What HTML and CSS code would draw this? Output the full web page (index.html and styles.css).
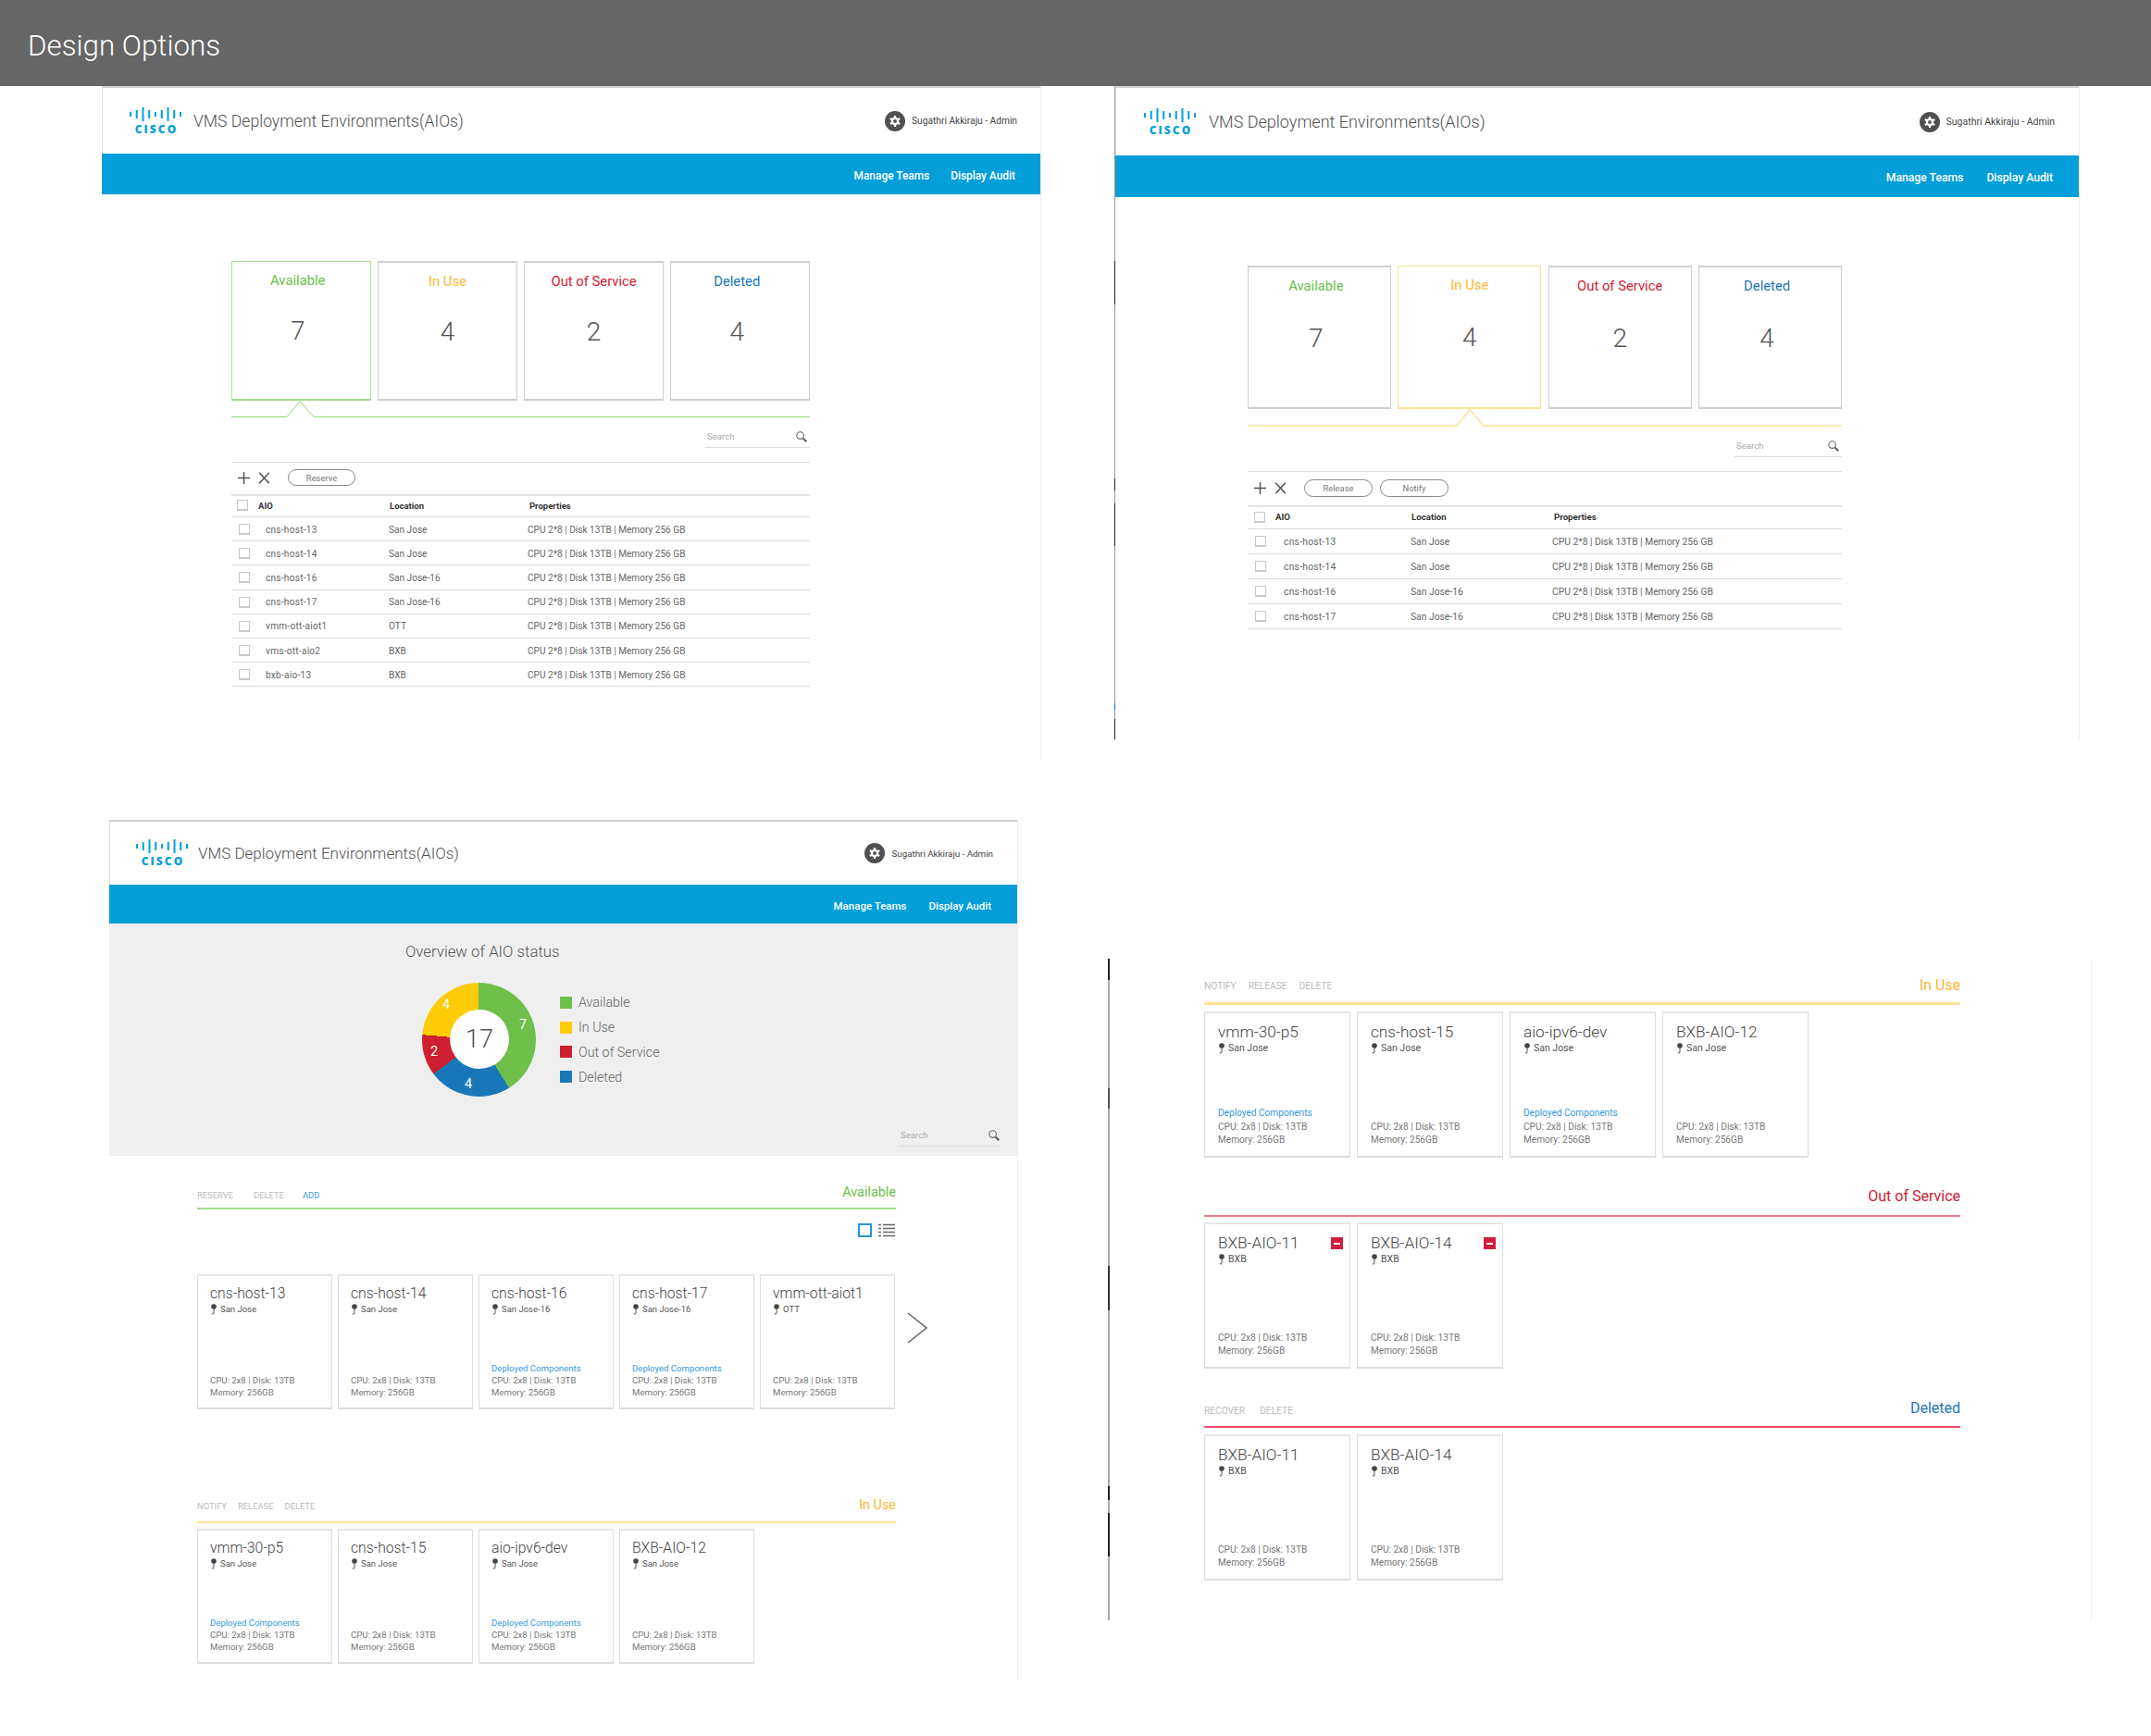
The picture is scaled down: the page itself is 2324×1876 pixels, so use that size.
FILE: index.html
```html
<!DOCTYPE html>
<html lang="en">
<head>
<meta charset="utf-8">
<title>Design Options</title>
<link rel="stylesheet" href="styles.css">
</head>
<body>
<svg class="defs" width="0" height="0" aria-hidden="true">
  <defs>
    <symbol id="bars" viewBox="0 0 56 15">
      <g fill="#049fd9">
        <rect x="0" y="5" width="2" height="5"/><rect x="6.75" y="3" width="2" height="9"/><rect x="13.5" y="0" width="2" height="15"/>
        <rect x="20.25" y="3" width="2" height="9"/><rect x="27" y="5" width="2" height="5"/><rect x="33.75" y="3" width="2" height="9"/>
        <rect x="40.5" y="0" width="2" height="15"/><rect x="47.25" y="3" width="2" height="9"/><rect x="54" y="5" width="2" height="5"/>
      </g>
    </symbol>
    <symbol id="gear" viewBox="0 0 22 22">
      <circle cx="11" cy="11" r="11" fill="#505050"/>
      <g fill="#fff">
        <rect x="9.8" y="5" width="2.4" height="12" rx=".5"/>
        <rect x="9.8" y="5" width="2.4" height="12" rx=".5" transform="rotate(60 11 11)"/>
        <rect x="9.8" y="5" width="2.4" height="12" rx=".5" transform="rotate(120 11 11)"/>
        <circle cx="11" cy="11" r="4.2"/>
      </g>
      <circle cx="11" cy="11" r="1.9" fill="#505050"/>
    </symbol>
    <symbol id="mag" viewBox="0 0 12 12">
      <circle cx="4.6" cy="4.6" r="3.8" fill="none" stroke="#666" stroke-width="1.1"/>
      <path d="M7.6 7.6 11.2 11.2" stroke="#555" stroke-width="2"/>
    </symbol>
    <symbol id="pin" viewBox="0 0 8 12">
      <circle cx="4" cy="3" r="2.8" fill="#444"/>
      <path d="M4 5v5.4M4 10.8H1.8" stroke="#555" stroke-width="1" fill="none"/>
    </symbol>
    <symbol id="plus" viewBox="0 0 13 13"><path d="M6.5 0v13M0 6.5h13" stroke="#555" stroke-width="1.5"/></symbol>
    <symbol id="times" viewBox="0 0 13 13"><path d="M1.2.7l10.6 11.6M11.8.7 1.2 12.3" stroke="#555" stroke-width="1.6"/></symbol>
  </defs>
</svg>

<header class="banner"><h1 class="banner-title">Design Options</h1></header>

<main class="board">
  <div class="column column-left">

    <section class="app app-a">
      <div class="app-head">
        <div class="logo"><svg class="logo-bars"><use href="#bars"/></svg><span class="logo-word">CISCO</span></div>
        <div class="app-title">VMS Deployment Environments(AIOs)</div>
        <div class="user"><svg class="gear"><use href="#gear"/></svg><span class="user-name">Sugathri Akkiraju - Admin</span></div>
      </div>
      <nav class="app-nav"><a class="nav-link">Manage Teams</a><a class="nav-link">Display Audit</a></nav>
      <div class="app-body">
        <div class="status-row">
          <div class="status status-on-green status-nudge"><div class="status-label text-green">Available</div><div class="status-value">7</div></div>
          <div class="status"><div class="status-label text-yellow">In Use</div><div class="status-value">4</div></div>
          <div class="status"><div class="status-label text-red">Out of Service</div><div class="status-value">2</div></div>
          <div class="status status-nudge"><div class="status-label text-blue">Deleted</div><div class="status-value">4</div></div>
        </div>
        <svg class="pointer" viewBox="0 0 625 18" preserveAspectRatio="none"><path d="M0 17.5H60L74 .5 89 17.5H625" fill="none" stroke="#92d67a" stroke-width="1"/></svg>
        <div class="search"><span class="search-text">Search</span><svg class="mag"><use href="#mag"/></svg></div>
        <div class="toolbar">
          <svg class="tool-icon"><use href="#plus"/></svg><svg class="tool-icon"><use href="#times"/></svg>
          <div class="pills"><span class="pill">Reserve</span></div>
        </div>
        <div class="table">
          <div class="thead"><span class="check"></span><span>AIO</span><span>Location</span><span>Properties</span></div>
          <div class="trow"><span class="check"></span><span>cns-host-13</span><span>San Jose</span><span>CPU 2*8 | Disk 13TB | Memory 256 GB</span></div>
          <div class="trow"><span class="check"></span><span>cns-host-14</span><span>San Jose</span><span>CPU 2*8 | Disk 13TB | Memory 256 GB</span></div>
          <div class="trow"><span class="check"></span><span>cns-host-16</span><span>San Jose-16</span><span>CPU 2*8 | Disk 13TB | Memory 256 GB</span></div>
          <div class="trow"><span class="check"></span><span>cns-host-17</span><span>San Jose-16</span><span>CPU 2*8 | Disk 13TB | Memory 256 GB</span></div>
          <div class="trow"><span class="check"></span><span>vmm-ott-aiot1</span><span>OTT</span><span>CPU 2*8 | Disk 13TB | Memory 256 GB</span></div>
          <div class="trow"><span class="check"></span><span>vms-ott-aio2</span><span>BXB</span><span>CPU 2*8 | Disk 13TB | Memory 256 GB</span></div>
          <div class="trow"><span class="check"></span><span>bxb-aio-13</span><span>BXB</span><span>CPU 2*8 | Disk 13TB | Memory 256 GB</span></div>
        </div>
      </div>
    </section>

    <section class="app app-c">
      <div class="app-head">
        <div class="logo"><svg class="logo-bars"><use href="#bars"/></svg><span class="logo-word">CISCO</span></div>
        <div class="app-title">VMS Deployment Environments(AIOs)</div>
        <div class="user"><svg class="gear"><use href="#gear"/></svg><span class="user-name">Sugathri Akkiraju - Admin</span></div>
      </div>
      <nav class="app-nav"><a class="nav-link">Manage Teams</a><a class="nav-link">Display Audit</a></nav>
      <div class="overview">
        <h2 class="overview-title">Overview of AIO status</h2>
        <div class="chart-row">
          <div class="donut">
            <span class="donut-hole">17</span>
            <span class="slice-num slice-green">7</span>
            <span class="slice-num slice-blue">4</span>
            <span class="slice-num slice-red">2</span>
            <span class="slice-num slice-yellow">4</span>
          </div>
          <ul class="legend">
            <li class="legend-item"><i class="swatch swatch-green"></i>Available</li>
            <li class="legend-item"><i class="swatch swatch-yellow"></i>In Use</li>
            <li class="legend-item"><i class="swatch swatch-red"></i>Out of Service</li>
            <li class="legend-item"><i class="swatch swatch-blue"></i>Deleted</li>
          </ul>
        </div>
        <div class="search"><span class="search-text">Search</span><svg class="mag"><use href="#mag"/></svg></div>
      </div>
      <div class="sections">
        <div class="section-head rule-green head-available">
          <div class="actions actions-wide"><span class="action">RESERVE</span><span class="action">DELETE</span><span class="action action-on">ADD</span></div>
          <div class="section-label text-green">Available</div>
        </div>
        <div class="view-toggle">
          <span class="view-card"></span>
          <svg class="view-list" viewBox="0 0 18 15"><path d="M0 1.5h3M5 1.5h13M0 5.5h3M5 5.5h13M0 9.5h3M5 9.5h13M0 13.5h3M5 13.5h13" stroke="#666" stroke-width="1.6"/></svg>
        </div>
        <div class="card-row card-row-carousel">
          <article class="card"><div class="card-name">cns-host-13</div><div class="card-loc"><svg class="pin"><use href="#pin"/></svg>San Jose</div><div class="card-foot"><div>CPU: 2x8 | Disk: 13TB</div><div>Memory: 256GB</div></div></article>
          <article class="card"><div class="card-name">cns-host-14</div><div class="card-loc"><svg class="pin"><use href="#pin"/></svg>San Jose</div><div class="card-foot"><div>CPU: 2x8 | Disk: 13TB</div><div>Memory: 256GB</div></div></article>
          <article class="card"><div class="card-name">cns-host-16</div><div class="card-loc"><svg class="pin"><use href="#pin"/></svg>San Jose-16</div><div class="card-foot"><div class="card-link">Deployed Components</div><div>CPU: 2x8 | Disk: 13TB</div><div>Memory: 256GB</div></div></article>
          <article class="card"><div class="card-name">cns-host-17</div><div class="card-loc"><svg class="pin"><use href="#pin"/></svg>San Jose-16</div><div class="card-foot"><div class="card-link">Deployed Components</div><div>CPU: 2x8 | Disk: 13TB</div><div>Memory: 256GB</div></div></article>
          <article class="card"><div class="card-name">vmm-ott-aiot1</div><div class="card-loc"><svg class="pin"><use href="#pin"/></svg>OTT</div><div class="card-foot"><div>CPU: 2x8 | Disk: 13TB</div><div>Memory: 256GB</div></div></article>
          <svg class="chevron" viewBox="0 0 22 34"><path d="M1 1 21 17 1 33" fill="none" stroke="#666" stroke-width="1.5"/></svg>
        </div>
        <div class="section-head rule-yellow head-inuse">
          <div class="actions"><span class="action">NOTIFY</span><span class="action">RELEASE</span><span class="action">DELETE</span></div>
          <div class="section-label text-yellow">In Use</div>
        </div>
        <div class="card-row">
          <article class="card"><div class="card-name">vmm-30-p5</div><div class="card-loc"><svg class="pin"><use href="#pin"/></svg>San Jose</div><div class="card-foot"><div class="card-link">Deployed Components</div><div>CPU: 2x8 | Disk: 13TB</div><div>Memory: 256GB</div></div></article>
          <article class="card"><div class="card-name">cns-host-15</div><div class="card-loc"><svg class="pin"><use href="#pin"/></svg>San Jose</div><div class="card-foot"><div>CPU: 2x8 | Disk: 13TB</div><div>Memory: 256GB</div></div></article>
          <article class="card"><div class="card-name">aio-ipv6-dev</div><div class="card-loc"><svg class="pin"><use href="#pin"/></svg>San Jose</div><div class="card-foot"><div class="card-link">Deployed Components</div><div>CPU: 2x8 | Disk: 13TB</div><div>Memory: 256GB</div></div></article>
          <article class="card"><div class="card-name">BXB-AIO-12</div><div class="card-loc"><svg class="pin"><use href="#pin"/></svg>San Jose</div><div class="card-foot"><div>CPU: 2x8 | Disk: 13TB</div><div>Memory: 256GB</div></div></article>
        </div>
      </div>
    </section>
  </div>

  <div class="column column-right">
    <section class="app app-b">
      <div class="app-head">
        <div class="logo"><svg class="logo-bars"><use href="#bars"/></svg><span class="logo-word">CISCO</span></div>
        <div class="app-title">VMS Deployment Environments(AIOs)</div>
        <div class="user"><svg class="gear"><use href="#gear"/></svg><span class="user-name">Sugathri Akkiraju - Admin</span></div>
      </div>
      <nav class="app-nav"><a class="nav-link">Manage Teams</a><a class="nav-link">Display Audit</a></nav>
      <div class="app-body">
        <div class="status-row">
          <div class="status status-nudge"><div class="status-label text-green">Available</div><div class="status-value">7</div></div>
          <div class="status status-on-yellow"><div class="status-label text-yellow">In Use</div><div class="status-value">4</div></div>
          <div class="status"><div class="status-label text-red">Out of Service</div><div class="status-value">2</div></div>
          <div class="status status-nudge"><div class="status-label text-blue">Deleted</div><div class="status-value">4</div></div>
        </div>
        <svg class="pointer" viewBox="0 0 642 19" preserveAspectRatio="none"><path d="M0 18H226L240 .5 255 18H642" fill="none" stroke="#fde394" stroke-width="1.4"/></svg>
        <div class="search"><span class="search-text">Search</span><svg class="mag"><use href="#mag"/></svg></div>
        <div class="toolbar">
          <svg class="tool-icon"><use href="#plus"/></svg><svg class="tool-icon"><use href="#times"/></svg>
          <div class="pills"><span class="pill">Release</span><span class="pill">Notify</span></div>
        </div>
        <div class="table">
          <div class="thead"><span class="check"></span><span>AIO</span><span>Location</span><span>Properties</span></div>
          <div class="trow"><span class="check"></span><span>cns-host-13</span><span>San Jose</span><span>CPU 2*8 | Disk 13TB | Memory 256 GB</span></div>
          <div class="trow"><span class="check"></span><span>cns-host-14</span><span>San Jose</span><span>CPU 2*8 | Disk 13TB | Memory 256 GB</span></div>
          <div class="trow"><span class="check"></span><span>cns-host-16</span><span>San Jose-16</span><span>CPU 2*8 | Disk 13TB | Memory 256 GB</span></div>
          <div class="trow"><span class="check"></span><span>cns-host-17</span><span>San Jose-16</span><span>CPU 2*8 | Disk 13TB | Memory 256 GB</span></div>
        </div>
      </div>
    </section>

    <section class="app-d">
      <div class="section-head rule-yellow-strong head-d-inuse">
        <div class="actions actions-d"><span class="action">NOTIFY</span><span class="action">RELEASE</span><span class="action">DELETE</span></div>
        <div class="section-label text-yellow">In Use</div>
      </div>
      <div class="card-row">
        <article class="card"><div class="card-name">vmm-30-p5</div><div class="card-loc"><svg class="pin"><use href="#pin"/></svg>San Jose</div><div class="card-foot"><div class="card-link">Deployed Components</div><div>CPU: 2x8 | Disk: 13TB</div><div>Memory: 256GB</div></div></article>
        <article class="card"><div class="card-name">cns-host-15</div><div class="card-loc"><svg class="pin"><use href="#pin"/></svg>San Jose</div><div class="card-foot"><div>CPU: 2x8 | Disk: 13TB</div><div>Memory: 256GB</div></div></article>
        <article class="card"><div class="card-name">aio-ipv6-dev</div><div class="card-loc"><svg class="pin"><use href="#pin"/></svg>San Jose</div><div class="card-foot"><div class="card-link">Deployed Components</div><div>CPU: 2x8 | Disk: 13TB</div><div>Memory: 256GB</div></div></article>
        <article class="card"><div class="card-name">BXB-AIO-12</div><div class="card-loc"><svg class="pin"><use href="#pin"/></svg>San Jose</div><div class="card-foot"><div>CPU: 2x8 | Disk: 13TB</div><div>Memory: 256GB</div></div></article>
      </div>
      <div class="section-head rule-red-soft head-d-out">
        <div class="actions"></div>
        <div class="section-label text-red">Out of Service</div>
      </div>
      <div class="card-row">
        <article class="card"><span class="minus-badge"></span><div class="card-name">BXB-AIO-11</div><div class="card-loc"><svg class="pin"><use href="#pin"/></svg>BXB</div><div class="card-foot"><div>CPU: 2x8 | Disk: 13TB</div><div>Memory: 256GB</div></div></article>
        <article class="card"><span class="minus-badge"></span><div class="card-name">BXB-AIO-14</div><div class="card-loc"><svg class="pin"><use href="#pin"/></svg>BXB</div><div class="card-foot"><div>CPU: 2x8 | Disk: 13TB</div><div>Memory: 256GB</div></div></article>
      </div>
      <div class="section-head rule-red head-d-deleted">
        <div class="actions actions-mid"><span class="action">RECOVER</span><span class="action">DELETE</span></div>
        <div class="section-label text-blue">Deleted</div>
      </div>
      <div class="card-row">
        <article class="card"><div class="card-name">BXB-AIO-11</div><div class="card-loc"><svg class="pin"><use href="#pin"/></svg>BXB</div><div class="card-foot"><div>CPU: 2x8 | Disk: 13TB</div><div>Memory: 256GB</div></div></article>
        <article class="card"><div class="card-name">BXB-AIO-14</div><div class="card-loc"><svg class="pin"><use href="#pin"/></svg>BXB</div><div class="card-foot"><div>CPU: 2x8 | Disk: 13TB</div><div>Memory: 256GB</div></div></article>
      </div>
    </section>
  </div>
</main>
</body>
</html>
```

FILE: styles.css
```css
* { box-sizing: border-box; }

html, body { margin: 0; padding: 0; }

body {
  width: 2324px;
  height: 1876px;
  overflow: hidden;
  background: #fff;
  color: #555;
  font-family: Roboto, "Liberation Sans", sans-serif;
  font-weight: 300;
}

.defs { position: absolute; }

/* Banner */
.banner {
  height: 93px;
  background: #666;
  display: flex;
  align-items: center;
  padding-left: 30px;
  padding-top: 6px;
}
.banner-title { margin: 0; color: #fff; font-size: 31.3px; font-weight: 300; }

/* Board */
.board { display: flex; }
.column { display: flex; flex-direction: column; align-items: flex-start; }
.column-left { width: 1190px; }

.app { display: flex; flex-direction: column; }

.app-a {
  margin-left: 110px; width: 1015px; height: 729px;
  border-right: 1px solid #eee;
  --head-h: 73px; --nav-h: 44px; --logo-x: 29px; --title-gap: 13px; --title-fs: 17.6px; --head-r: 25px;
  --user-fs: 10.2px; --nav-fs: 11.9px; --nav-gap: 23px; --nav-r: 27px;
  --body-x: 140px; --body-w: 625px; --body-t: 72px;
  --status-h: 151px; --pointer-h: 18px; --search-w: 113px; --value-mt: 27px;
  --tool-h: 35px; --thead-h: 25px; --trow-h: 26.2px;
  --hc1: 23px; --hc2: 142px; --hc3: 151px; --hp: 6px;
  --c1: 29px; --c2: 133px; --c3: 150px; --p: 8px;
  --pill-w: 73px; --pill-h: 18px; --table-fs: 10.1px;
}
.app-b {
  margin-left: 14px; width: 1043px; height: 706px;
  border-right: 1px solid #eee;
  padding-left: 1px;
  background: linear-gradient(to bottom,
    #999 0, #999 189px, #222 189px, #222 236px, #999 236px, #999 424px, #222 424px, #222 437px, #999 437px, #999 451px,
    #222 451px, #222 497px, #999 497px, #999 667px, #0a78b0 667px, #0a78b0 674px, #999 674px, #999 684px, #222 684px, #222 706px)
    left top / 1px 100% no-repeat;
  --head-h: 75px; --nav-h: 45px; --logo-x: 30px; --title-gap: 14px; --title-fs: 18px; --head-r: 26px;
  --user-fs: 10.5px; --nav-fs: 12.2px; --nav-gap: 25px; --nav-r: 28px;
  --body-x: 143px; --body-w: 642px; --body-t: 74px;
  --status-h: 155px; --pointer-h: 19px; --search-w: 116px; --value-mt: 29px;
  --tool-h: 37px; --thead-h: 26px; --trow-h: 26.9px;
  --hc1: 23px; --hc2: 147px; --hc3: 154px; --hp: 7px;
  --c1: 31px; --c2: 137px; --c3: 153px; --p: 8px;
  --pill-w: 74px; --pill-h: 19px; --table-fs: 10.3px;
}
.app-c {
  margin-left: 118px; margin-top: 64px; width: 982px; height: 931px;
  border-right: 1px solid #eee;
  --head-h: 70px; --nav-h: 42px; --logo-x: 28px; --title-gap: 11px; --title-fs: 17px; --head-r: 26px;
  --user-fs: 9.8px; --nav-fs: 11.5px; --nav-gap: 24px; --nav-r: 28px;
  --search-w: 110px;
  --card-w: 146px; --card-h: 146px; --card-gap: 6px;
  --name-fs: 15.7px; --loc-fs: 9.5px; --foot-fs: 9.6px;
  --card-pt: 9px; --card-pb: 10px; --card-px: 13px; --name-lh: 20px; --loc-lh: 14px; --foot-lh: 13px;
}
.app-d {
  margin-left: 7px; margin-top: 237px; width: 1063px; height: 715px;
  padding-left: 104px; padding-top: 19px;
  border-right: 1px solid #eee;
  display: flex; flex-direction: column; align-items: flex-start;
  background: linear-gradient(to bottom,
    #222 0, #222 23px, #aaa 23px, #aaa 140px, #555 140px, #555 162px, #aaa 162px, #aaa 332px,
    #333 332px, #333 380px, #aaa 380px, #aaa 570px, #222 570px, #222 585px, #aaa 585px, #aaa 599px,
    #222 599px, #222 646px, #aaa 646px, #aaa 715px)
    left top / 2px 100% no-repeat;
  --card-w: 158px; --card-h: 158px; --card-gap: 7px;
  --name-fs: 17.2px; --loc-fs: 10.5px; --foot-fs: 10.1px;
  --card-pt: 10px; --card-pb: 10px; --card-px: 14px; --name-lh: 20px; --loc-lh: 16px; --foot-lh: 14.2px;
}
.app-d .section-label { font-size: 16px; }
.app-d .action { font-size: 10.2px; }

/* App header */
.app-head {
  height: var(--head-h);
  flex: none;
  display: flex;
  align-items: center;
  padding: 0 var(--head-r) 0 var(--logo-x);
  border-top: 2px solid #d2d2d2;
  border-left: 1px solid #e2e2e2;
}
.logo { width: 56px; display: flex; flex-direction: column; align-items: center; }
.logo-bars { width: 56px; height: 15px; display: block; }
.logo-word {
  margin-top: 3px;
  color: #049fd9;
  font-family: "Open Sans", sans-serif;
  font-weight: 800;
  font-size: 12px;
  line-height: 12px;
  letter-spacing: 2.1px;
  margin-right: -2.1px;
}
.app-title { margin-left: var(--title-gap); font-size: var(--title-fs); color: #4f4f4f; }
.user { margin-left: auto; display: flex; align-items: center; gap: 7px; }
.gear { width: 22px; height: 22px; display: block; }
.user-name { font-size: var(--user-fs); font-weight: 400; color: #444; }

.app-nav {
  height: var(--nav-h);
  flex: none;
  background: #049fd9;
  display: flex;
  align-items: center;
  justify-content: flex-end;
  gap: var(--nav-gap);
  padding-right: var(--nav-r);
  padding-top: 3px;
}
.nav-link { color: #fff; font-size: var(--nav-fs); font-weight: 500; }

/* Status view */
.app-body { padding: var(--body-t) 0 0 var(--body-x); width: calc(var(--body-x) + var(--body-w)); }
.status-row { display: grid; grid-template-columns: repeat(4, 1fr); gap: 7.67px; }
.status {
  height: var(--status-h);
  border: 2px solid #cfcfcf;
  border-width: 2px 1.5px;
  display: flex;
  flex-direction: column;
  align-items: center;
  padding-top: 10px;
}
.status-nudge { padding-right: 7px; }
.status-on-green { border: 1px solid #a5dc8f; border-bottom-width: 2px; }
.status-on-yellow { border: 1px solid #fde394; border-bottom-width: 2px; }
.status-label { font-size: 14.8px; line-height: 20px; font-weight: 400; }
.status-value { margin-top: var(--value-mt); font-size: 28px; line-height: 36px; color: #555; }
.pointer { display: block; width: 100%; height: var(--pointer-h); }

.text-green { color: #6cc04a; }
.text-yellow { color: #fbb833; }
.text-red { color: #cf2030; }
.text-blue { color: #1b75bb; }

/* Search */
.search {
  width: var(--search-w);
  margin: 14px 0 15px auto;
  padding: 0 3px 5px 2px;
  height: 19px;
  border-bottom: 1px solid #ddd;
  display: flex;
  align-items: center;
  justify-content: space-between;
}
.search-text { font-size: 9.6px; color: #aaa; font-weight: 400; }
.mag { width: 12px; height: 12px; display: block; }

/* Toolbar + table */
.toolbar {
  height: var(--tool-h);
  border-top: 1px solid #ddd;
  display: flex;
  align-items: center;
  gap: 9px;
  padding-left: 7px;
  padding-bottom: 2px;
}
.tool-icon { width: 13px; height: 13px; display: block; }
.pills { display: flex; gap: 8px; margin-left: 10px; }
.pill {
  width: var(--pill-w);
  height: var(--pill-h);
  border: 1px solid #8a8a8a;
  border-radius: 10px;
  display: flex;
  align-items: center;
  justify-content: center;
  font-size: 9.4px;
  color: #777;
  font-weight: 400;
}
.thead, .trow {
  display: grid;
  align-items: center;
  border-bottom: 1px solid #ddd;
  font-size: var(--table-fs);
}
.thead {
  height: var(--thead-h);
  border-top: 2px solid #e4e4e4;
  grid-template-columns: var(--hc1) var(--hc2) var(--hc3) 1fr;
  padding-left: var(--hp);
  padding-bottom: 2px;
  font-weight: 700;
  color: #333;
  font-size: calc(var(--table-fs) - .6px);
}
.trow {
  height: var(--trow-h);
  grid-template-columns: var(--c1) var(--c2) var(--c3) 1fr;
  padding-left: var(--p);
  padding-top: 1px;
  color: #666;
  font-weight: 400;
}
.trow span:nth-child(2) { letter-spacing: .25px; }
.check {
  display: block;
  width: 12px;
  height: 12px;
  border: 1px solid #c9c9c9;
  border-bottom-width: 2px;
}

/* Overview */
.overview {
  background: #efefef;
  flex: none;
  display: flex;
  flex-direction: column;
  padding-top: 18px;
}
.overview-title {
  margin: 0 0 0 320px;
  font-size: 16.8px;
  line-height: 24px;
  font-weight: 300;
  color: #555;
}
.chart-row { display: flex; margin: 22px 0 0 338px; }
.donut {
  position: relative;
  width: 123px;
  height: 123px;
  border-radius: 50%;
  background: conic-gradient(#6fbf4b 0 148deg, #1878b7 148deg 233deg, #ce2030 233deg 275deg, #fecb05 275deg 360deg);
}
.donut-hole {
  position: absolute;
  left: 30px;
  top: 29px;
  width: 64px;
  height: 64px;
  border-radius: 50%;
  background: #fff;
  display: flex;
  align-items: center;
  justify-content: center;
  font-size: 27px;
  color: #555;
}
.slice-num { position: absolute; color: #fff; font-size: 14.5px; line-height: 16px; font-weight: 400; }
.slice-green { left: 105px; top: 38px; }
.slice-blue { left: 46px; top: 102px; }
.slice-red { left: 9px; top: 67px; }
.slice-yellow { left: 22px; top: 16px; }
.legend { list-style: none; margin: 8px 0 0 26px; padding: 0; }
.legend-item {
  height: 26.8px;
  display: flex;
  align-items: center;
  gap: 7px;
  font-size: 14.3px;
  color: #666;
}
.swatch { display: block; width: 13px; height: 13px; }
.swatch-green { background: #6fbf4b; }
.swatch-yellow { background: #fecb05; }
.swatch-red { background: #ce2030; }
.swatch-blue { background: #1878b7; }
.overview .search { margin: 35px 18px 10px auto; padding-right: 1px; }

/* Sections with cards */
.sections { padding-left: 95px; display: flex; flex-direction: column; align-items: flex-start; }
.section-head {
  display: flex;
  justify-content: space-between;
  align-items: flex-start;
  border-bottom: 2px solid #ccc;
}
.head-available { width: 755px; height: 28px; margin-top: 30px; border-color: #a5dc8f; }
.head-inuse { width: 755px; height: 29px; margin-top: 94px; border-color: #fde394; }
.head-d-inuse { width: 817px; height: 31px; border-bottom-width: 3px; border-color: #fde394; }
.head-d-out { width: 817px; height: 32px; margin-top: 32px; border-color: #e57b88; }
.head-d-deleted { width: 817px; height: 31px; margin-top: 33px; border-color: #e8506a; }
.actions { display: flex; gap: 12px; padding-top: 5px; }
.actions-wide { gap: 22px; padding-top: 7px; }
.actions-mid { gap: 16px; padding-top: 7px; }
.actions-d { gap: 13px; }
.action { font-size: 9.4px; line-height: 12px; color: #bbb; font-weight: 400; }
.action-on { color: #3a97e0; margin-left: -2px; }
.section-label { font-size: 14.4px; line-height: 20px; font-weight: 400; }
.view-toggle {
  width: 755px;
  height: 15px;
  margin: 15px 0 40px;
  display: flex;
  justify-content: flex-end;
  gap: 7px;
  padding-right: 1px;
}
.view-card { display: block; width: 15px; height: 15px; border: 2.5px solid #2a93d5; }
.view-list { width: 18px; height: 15px; display: block; }

.card-row { display: flex; gap: var(--card-gap); margin-top: 6px; align-items: flex-start; }
.head-available + .view-toggle + .card-row { margin-top: 0; }
.head-d-inuse + .card-row, .head-d-deleted + .card-row { margin-top: 7px; }
.card {
  position: relative;
  width: var(--card-w);
  height: var(--card-h);
  flex: none;
  border: 1px solid #ddd;
  border-top-width: 2px;
  border-bottom-width: 2px;
  border-top-color: #e6e6e6;
  display: flex;
  flex-direction: column;
  padding: var(--card-pt) var(--card-px) var(--card-pb);
}
.card-name { font-size: var(--name-fs); line-height: var(--name-lh); color: #444; }
.card-loc {
  display: flex;
  align-items: center;
  gap: 3px;
  font-size: var(--loc-fs);
  line-height: var(--loc-lh);
  color: #555;
  font-weight: 400;
}
.pin { width: 8px; height: 12px; display: block; flex: none; }
.card-foot {
  margin-top: auto;
  font-size: var(--foot-fs);
  line-height: var(--foot-lh);
  color: #777;
  font-weight: 400;
}
.card-link { color: #3a97e0; }
.minus-badge {
  position: absolute;
  right: 7px;
  top: 14px;
  width: 13px;
  height: 13px;
  background: #d01f3c;
  display: flex;
  align-items: center;
  justify-content: center;
}
.minus-badge::before { content: ""; width: 7px; height: 2px; background: #fff; }
.chevron { width: 22px; height: 34px; margin: 41px 0 0 7px; display: block; flex: none; }
```
